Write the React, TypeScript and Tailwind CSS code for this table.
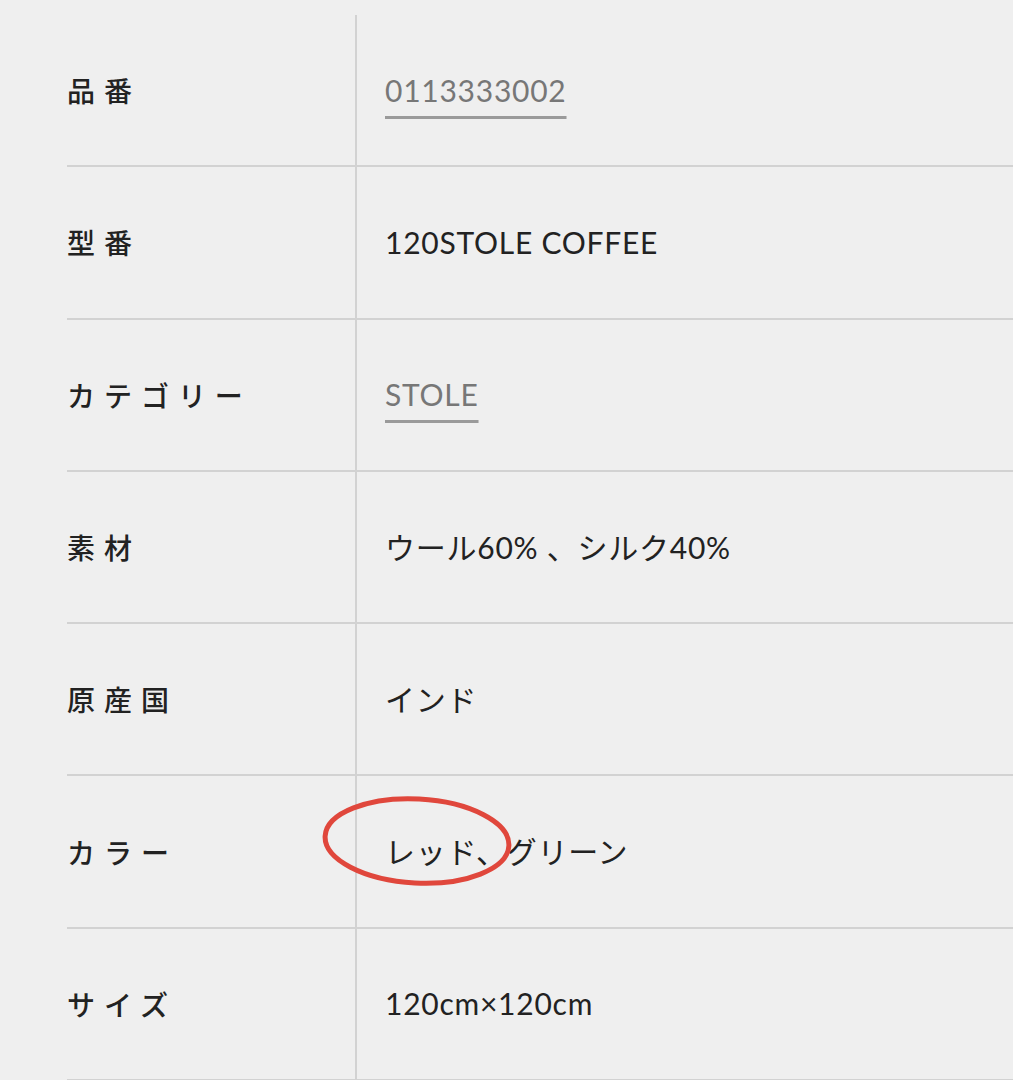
const rows: { label: string; value: string; link?: boolean }[] = [
  { label: "品番", value: "0113333002", link: true },
  { label: "型番", value: "120STOLE COFFEE" },
  { label: "カテゴリー", value: "STOLE", link: true },
  { label: "素材", value: "ウール60% 、シルク40%" },
  { label: "原産国", value: "インド" },
  { label: "カラー", value: "レッド、グリーン" },
  { label: "サイズ", value: "120cm×120cm" },
];

export default function App() {
  return (
    <div className="min-h-screen w-full bg-[#efefef] pl-[67px] pt-[15px] overflow-hidden">
      <div className="relative">
        {rows.map((r) => (
          <div key={r.label} className="flex h-[152.3px] border-b-2 border-[#d2d2d2]">
            <div className="w-[290px] shrink-0 flex items-center border-r-2 border-[#d2d2d2] font-['Noto_Sans_CJK_JP',sans-serif] font-medium text-[28px] tracking-[0.32em] text-[#222]">
              {r.label}
            </div>
            <div className="flex items-center pl-[28px] font-['Lato','Noto_Sans_CJK_JP',sans-serif] text-[30px] tracking-[0.025em] text-[#222]">
              {r.link ? (
                <span className="text-[#777] underline decoration-[#9a9a9a] decoration-3 underline-offset-[14px]">
                  {r.value}
                </span>
              ) : (
                r.value
              )}
            </div>
          </div>
        ))}

        {/* red marker circle */}
        <svg
          className="absolute left-[252px] top-[780px] pointer-events-none"
          width="200"
          height="100"
          viewBox="0 0 200 100"
        >
          <ellipse
            cx="98"
            cy="46"
            rx="92"
            ry="42"
            transform="rotate(3 98 46)"
            fill="none"
            stroke="#e0473c"
            strokeWidth="5"
          />
        </svg>
      </div>
    </div>
  );
}
